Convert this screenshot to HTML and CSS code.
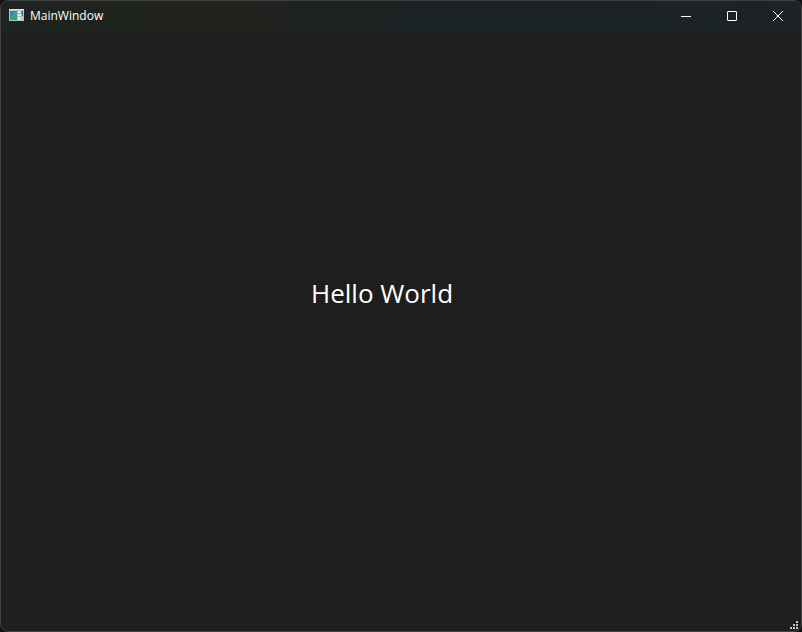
FILE: index.html
```html
<!DOCTYPE html>
<html lang="en">
<head>
<meta charset="utf-8">
<title>MainWindow</title>
<link rel="stylesheet" href="styles.css">
</head>
<body>
<div class="window">
  <header class="titlebar">
    <svg class="app-icon" width="15" height="14" viewBox="0 0 15 14" aria-hidden="true">
      <defs>
        <linearGradient id="pane" x1="0" y1="0" x2="1" y2="1">
          <stop offset="0" stop-color="#4674b8"/>
          <stop offset=".5" stop-color="#3b9ab0"/>
          <stop offset="1" stop-color="#2fa560"/>
        </linearGradient>
      </defs>
      <rect y="1" width="15" height="12" fill="#b9c2c6"/>
      <rect y="1" width="15" height="1" fill="#dde2e4"/>
      <rect x="1" y="3" width="7" height="9" fill="url(#pane)"/>
      <path d="M1 12V9l7-3v6z" fill="#38a862" opacity=".6"/>
      <rect x="9" y="3" width="3" height="9" fill="#e4e7e8"/>
      <path d="M9 5.500h3M9 8.500h3" stroke="#a9b3b8"/>
      <rect x="13" y="3" width="1" height="5" fill="#2c7080"/>
      <rect x="12" y="3" width="1" height="3" fill="#58a6b4"/>
    </svg>
    <h1 class="title">MainWindow</h1>
    <div class="controls">
      <button class="control" type="button" aria-label="Minimize">
        <svg width="10" height="10" viewBox="0 0 10 10"><path d="M0 5.500h10"/></svg>
      </button>
      <button class="control" type="button" aria-label="Maximize">
        <svg width="10" height="10" viewBox="0 0 10 10"><rect x=".5" y=".5" width="9" height="9" rx=".5"/></svg>
      </button>
      <button class="control" type="button" aria-label="Close">
        <svg width="10" height="10" viewBox="0 0 10 10"><path d="M0 0l10 10M10 0L0 10"/></svg>
      </button>
    </div>
  </header>
  <main class="content">
    <p class="greeting">Hello World</p>
  </main>
  <footer class="statusbar">
    <svg class="grip" width="8" height="8" viewBox="0 0 8 8" aria-hidden="true">
      <path d="M6 0h2v2H6zM3 3h2v2H3zM6 3h2v2H6zM0 6h2v2H0zM3 6h2v2H3zM6 6h2v2H6z"/>
    </svg>
  </footer>
</div>
</body>
</html>
```
FILE: styles.css
```css
* {
  box-sizing: border-box;
}

body {
  margin: 0;
  background: #121212;
  color: #fff;
  font-family: "Segoe UI", "Open Sans", "Noto Sans", sans-serif;
}

.window {
  display: flex;
  flex-direction: column;
  height: 100vh;
  overflow: hidden;
  border: 1px solid #414141;
  border-radius: 8px;
  background: #1e1e1e;
}

.titlebar {
  display: flex;
  align-items: center;
  height: 31px;
  padding: 0 0 1px 8px;
  background: linear-gradient(90deg, #1c2321, #1f231d 15%, #1f221e 35%, #1b2224 52%, #1b2325 90%, #1e2224);
}

.app-icon {
  margin: 0 6px 2px 0;
}

.title {
  margin: 0;
  font-size: 12px;
  font-weight: 400;
  line-height: 16px;
}

.controls {
  display: flex;
  align-self: stretch;
  margin-left: auto;
}

.control {
  display: flex;
  align-items: center;
  justify-content: center;
  width: 46px;
  padding: 0;
  border: 0;
  background: transparent;
}

.control svg {
  fill: none;
  stroke: #fff;
}

.content {
  display: grid;
  flex: 1;
  grid-template-columns: 310fr 490fr;
  align-content: center;
  padding-bottom: 67px;
}

.greeting {
  grid-column: 2;
  margin: 0;
  font-size: 26px;
  line-height: 36px;
}

.statusbar {
  display: flex;
  justify-content: flex-end;
  padding: 0 3px 2px 0;
}

.grip {
  fill: #c4c4c4;
}
```
